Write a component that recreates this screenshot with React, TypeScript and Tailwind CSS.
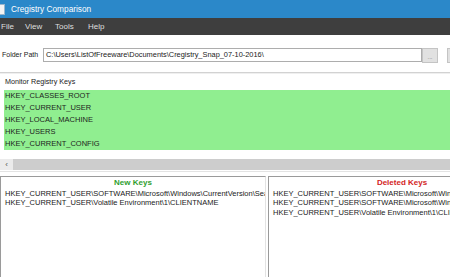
import React from "react";

const monitorKeys = [
  "HKEY_CLASSES_ROOT",
  "HKEY_CURRENT_USER",
  "HKEY_LOCAL_MACHINE",
  "HKEY_USERS",
  "HKEY_CURRENT_CONFIG",
];

const newKeys = [
  "HKEY_CURRENT_USER\\SOFTWARE\\Microsoft\\Windows\\CurrentVersion\\Search",
  "HKEY_CURRENT_USER\\Volatile Environment\\1\\CLIENTNAME",
];

const deletedKeys = [
  "HKEY_CURRENT_USER\\SOFTWARE\\Microsoft\\Windows\\CurrentVersion\\Explorer",
  "HKEY_CURRENT_USER\\SOFTWARE\\Microsoft\\Windows\\CurrentVersion\\Run",
  "HKEY_CURRENT_USER\\Volatile Environment\\1\\CLIENTNAME",
];

function KeyPanel({
  title,
  color,
  rows,
  width,
}: {
  title: string;
  color: string;
  rows: string[];
  width: string;
}) {
  return (
    <div
      className={`${width} shrink-0 h-full overflow-hidden border-t border-l border-r border-t-[#9a9a9a] border-l-[#9a9a9a] border-r-[#e3e3e3]`}
    >
      <div className={`h-[12px] leading-[12px] text-center font-bold text-[8px] ${color}`}>
        {title}
      </div>
      <div className="pl-[4px] text-[7.5px] leading-[9.3px] text-[#1a1a1a]">
        {rows.map((r, i) => (
          <div key={i} className="whitespace-nowrap">
            {r}
          </div>
        ))}
      </div>
    </div>
  );
}

export default function App() {
  return (
    <div className="w-[450px] h-[277px] overflow-hidden flex flex-col bg-white font-['Liberation_Sans',Arial,sans-serif]">
      {/* title bar */}
      <div className="h-[18px] shrink-0 bg-[#2b88c9] flex items-center">
        <div className="w-[5px] h-[11px] bg-[#f4f4f4] border-r border-t border-b border-[#9ab6cc]" />
        <span className="ml-[6px] text-white text-[8.3px]">Cregistry Comparison</span>
      </div>

      {/* menu bar */}
      <div className="h-[17px] shrink-0 bg-[#3e3e3e] flex items-center text-[8px] text-[#dedede]">
        <span className="w-[25px] pl-[1px]">File</span>
        <span className="w-[30px]">View</span>
        <span className="w-[33px]">Tools</span>
        <span>Help</span>
      </div>

      {/* folder path */}
      <div className="h-[37px] shrink-0 pt-[13px] flex items-start overflow-hidden">
        <div className="w-[43px] shrink-0 h-[15px] pl-[2px] flex items-center text-[7px] text-[#222]">
          Folder Path
        </div>
        <div className="w-[379px] shrink-0 h-[14px] border border-[#adadad] pl-[2px] flex items-center text-[7.4px] text-[#1a1a1a] whitespace-nowrap overflow-hidden">
          {"C:\\Users\\ListOfFreeware\\Documents\\Cregistry_Snap_07-10-2016\\"}
        </div>
        <div className="w-[16px] shrink-0 h-[15px] bg-[#e1e1e1] border border-[#c4c4c4] flex items-end justify-center pb-[2px] text-[6px] leading-none text-[#777]">
          ...
        </div>
        <div className="ml-[9px] w-[16px] shrink-0 h-[15px] bg-[#e1e1e1] border border-[#c4c4c4]" />
      </div>

      {/* separator */}
      <div className="h-[1px] shrink-0 bg-[#d2d2d2]" />
      <div className="h-[1px] shrink-0 bg-[#efefef]" />

      {/* monitor registry keys */}
      <div className="h-[16px] shrink-0 pl-[5px] flex items-center text-[7.2px] text-[#222]">
        Monitor Registry Keys
      </div>
      <div className="pl-[4px] shrink-0">
        <div className="h-[60px] bg-[#90ee90] text-[7.5px] text-[#1e1e1e]">
          {monitorKeys.map((k) => (
            <div key={k} className="h-[12px] pl-[1px] flex items-center">
              {k}
            </div>
          ))}
        </div>
      </div>
      <div className="h-[9px] shrink-0" />
      <div className="h-[11px] shrink-0 bg-[#cdcdcd] flex">
        <div className="w-[13px] h-full bg-[#ebebeb] flex items-center justify-center text-[8px] leading-none text-[#555]">
          ‹
        </div>
      </div>
      <div className="h-[1px] shrink-0 mt-[1px] bg-[#e3e3e3]" />
      <div className="h-[4px] shrink-0" />

      {/* result panels */}
      <div className="flex-1 flex gap-[2px] overflow-hidden">
        <KeyPanel title="New Keys" color="text-[#2f9e2f]" rows={newKeys} width="w-[266px]" />
        <KeyPanel title="Deleted Keys" color="text-[#d32424]" rows={deletedKeys} width="w-[268px]" />
      </div>
    </div>
  );
}
